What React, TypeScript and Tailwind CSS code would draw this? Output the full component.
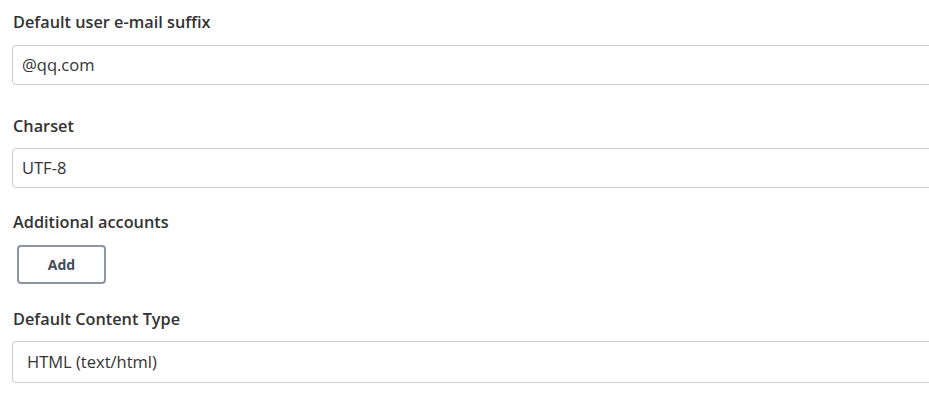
export default function App() {
  const font = { fontFamily: '"Open Sans", "Noto Sans", sans-serif' };
  return (
    <div className="w-[929px] h-[401px] overflow-hidden bg-white text-[#333]" style={font}>
      <div className="pl-3 pt-[10px]">
        <div className="pl-px text-[16.3px] leading-6 font-semibold text-[#333]">Default user e-mail suffix</div>
        <div className="mt-[11px] h-10 w-[1000px] border border-[#ccc] rounded flex items-center pl-[9px] text-[16.5px] text-[#333]">@qq.com</div>

        <div className="mt-[29px] pl-px text-[16.3px] leading-6 font-semibold text-[#333]">Charset</div>
        <div className="mt-[10px] h-10 w-[1000px] border border-[#ccc] rounded flex items-center pl-[9px] text-[16.5px] text-[#333]">UTF-8</div>

        <div className="mt-[22px] pl-px text-[16.3px] leading-6 font-semibold text-[#333]">Additional accounts</div>
        <div className="mt-[11px] pl-[5px]">
          <button className="h-[39px] w-[89px] border-2 border-[#8d969e] rounded-[4px] bg-white text-[14px] font-bold text-[#444c55] flex items-center justify-center">
            Add
          </button>
        </div>

        <div className="mt-[23px] pl-px text-[16.3px] leading-6 font-semibold text-[#333]">Default Content Type</div>
        <div className="mt-[10px] h-[42px] w-[1000px] border border-[#ccc] rounded flex items-center pl-[14px] text-[16.5px] text-[#333]">HTML (text/html)</div>
      </div>
    </div>
  );
}
